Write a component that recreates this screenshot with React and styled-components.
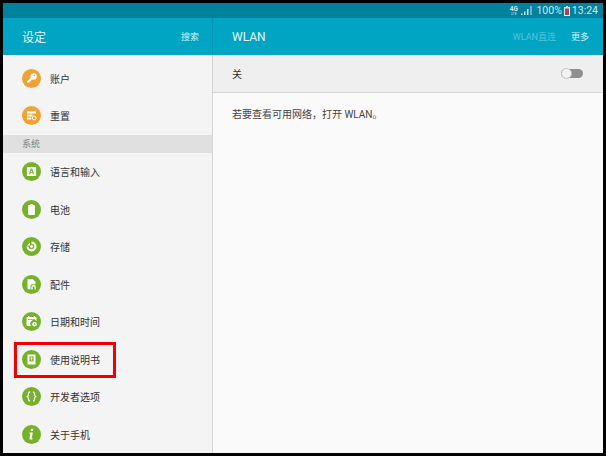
import React from 'react';
import styled, { createGlobalStyle } from 'styled-components';

const GlobalStyle = createGlobalStyle`
  html, body {
    margin: 0;
    padding: 0;
    background: #000;
  }
  * {
    box-sizing: border-box;
  }
`;

const Frame = styled.div`
  width: 606px;
  height: 456px;
  padding: 3px;
  background: #000;
  overflow: hidden;
  font-family: Roboto, "Noto Sans CJK SC", sans-serif;
`;

const Screen = styled.div`
  position: relative;
  height: 450px;
  display: flex;
  flex-direction: column;
  background: #fafafa;
  overflow: hidden;
`;

const StatusBar = styled.div`
  height: 15px;
  flex: none;
  background: #00829f;
  display: flex;
  align-items: center;
  justify-content: flex-end;
  padding-right: 5px;
  color: #cfe6ec;
  font-size: 10.5px;
`;

const StatusText = styled.span`
  display: flex;
  align-items: center;
  margin-left: ${({ $gap }) => $gap || 0}px;
  line-height: 15px;
`;

const Columns = styled.div`
  flex: 1;
  display: flex;
  min-height: 0;
`;

const Sidebar = styled.div`
  width: 210px;
  flex: none;
  display: flex;
  flex-direction: column;
  background: #f4f4f4;
  border-right: 1px solid #d4d4d4;
`;

const Main = styled.div`
  flex: 1;
  display: flex;
  flex-direction: column;
  background: #fafafa;
`;

const HeaderBar = styled.div`
  height: 37px;
  flex: none;
  display: flex;
  align-items: center;
  justify-content: space-between;
  background: #00a5c4;
  padding: 0 14px 0 19px;
  color: #e4f5f8;
`;

const SideHeaderBar = styled(HeaderBar)`
  margin-right: -1px;
  padding-right: 13px;
  border-right: 1px solid #0095b2;
`;

const HeaderTitle = styled.span`
  font-size: 12px;
`;

const HeaderAction = styled.span`
  font-size: 9px;
  margin-left: 15px;
  color: ${({ $dim }) => ($dim ? '#55c4da' : '#d6f0f5')};
`;

const HeaderActions = styled.div`
  display: flex;
  align-items: center;
`;

const List = styled.div`
  padding-top: 4.5px;
  display: flex;
  flex-direction: column;
`;

const Row = styled.div`
  height: 37.5px;
  flex: none;
  display: flex;
  align-items: center;
  padding-left: 19px;
  color: #333;
  font-size: 10px;
`;

const IconCircle = styled.span`
  width: 19px;
  height: 19px;
  flex: none;
  border-radius: 50%;
  background: ${({ $color }) => $color};
  margin-right: 9px;
  display: flex;
  align-items: center;
  justify-content: center;
`;

const SectionTitle = styled.div`
  height: 18.5px;
  flex: none;
  background: #e0e0e0;
  padding-left: 19px;
  color: #808080;
  font-size: 9px;
  line-height: 18px;
`;

const SwitchRow = styled.div`
  height: 38px;
  flex: none;
  display: flex;
  align-items: center;
  justify-content: space-between;
  padding: 0 20px 0 19px;
  background: #efefef;
  border-bottom: 1px solid #d6d6d6;
  color: #333;
  font-size: 10px;
`;

const SwitchTrack = styled.span`
  position: relative;
  display: block;
  width: 22px;
  height: 9px;
  border-radius: 5px;
  background: #8f8f8f;
`;

const SwitchKnob = styled.span`
  position: absolute;
  left: 0;
  top: -1px;
  width: 11px;
  height: 11px;
  border-radius: 50%;
  background: #f2f2f2;
  border: 1px solid #c4c4c4;
`;

const Hint = styled.div`
  padding: 14px 19px;
  color: #444;
  font-size: 10px;
  line-height: 16px;
`;

// red box drawn on top of the screenshot
const Highlight = styled.div`
  position: absolute;
  left: 11px;
  top: 339px;
  width: 102px;
  height: 36px;
  border: 3px solid #f00000;
  pointer-events: none;
`;

const NetworkBadge = styled.span`
  width: 9px;
  display: flex;
  flex-direction: column;
  align-items: center;
  font-size: 6.5px;
  line-height: 6px;
  font-weight: 700;
`;

const NetworkSub = styled.span`
  font-size: 3.5px;
  line-height: 4px;
  font-weight: 400;
`;

const Glyph = ({ children }) => (
  <svg width="13" height="13" viewBox="0 0 13 13" fill="#fff">
    {children}
  </svg>
);

const orange = '#f0a232';
const green = '#75b229';

const topItems = [
  {
    label: '账户',
    color: orange,
    icon: (
      <Glyph>
        <circle cx="8.600" cy="4.400" r="3.200" />
        <path d="M6.800 5.200 8 6.400 4 10.800H2.200V9Z" />
        <circle cx="9.400" cy="3.600" r=".8" fill={orange} />
      </Glyph>
    ),
  },
  {
    label: '重置',
    color: orange,
    icon: (
      <Glyph>
        <path d="M2 2.200h9v2.400H2zM2 5.400h5.500v2.200H2zM2 8.400h4.200v2.200H2z" />
        <circle cx="9.200" cy="9" r="1.900" fill="none" stroke="#fff" strokeWidth="1" />
      </Glyph>
    ),
  },
];

const systemItems = [
  {
    label: '语言和输入',
    icon: (
      <Glyph>
        <path
          fillRule="evenodd"
          d="M2.500 2h8a.6.6 0 0 1 .6.6v7.800a.6.6 0 0 1-.6.6h-8a.6.6 0 0 1-.6-.6V2.600a.6.6 0 0 1 .6-.6ZM5.800 3.500 4 9.300h1.100l.4-1.200h2l.4 1.200H9L7.200 3.500ZM5.800 7.200l.7-2.300.7 2.300Z"
        />
      </Glyph>
    ),
  },
  {
    label: '电池',
    icon: (
      <Glyph>
        <path d="M5.200 1h2.600v1h1.400c.4 0 .7.3.7.7v8.600c0 .4-.3.7-.7.7H3.800a.7.7 0 0 1-.7-.7V2.700c0-.4.3-.7.7-.7h1.400Z" />
      </Glyph>
    ),
  },
  {
    label: '存储',
    icon: (
      <Glyph>
        <path
          fillRule="evenodd"
          d="M6.500 1.500a5 5 0 1 1-5 5h2.200a2.800 2.800 0 1 0 2.800-2.800Z"
        />
        <circle cx="6.500" cy="6.500" r="1.400" />
        <path d="M2 5.500 5 2.500v3Z" />
      </Glyph>
    ),
  },
  {
    label: '配件',
    icon: (
      <Glyph>
        <path d="M2.500 1.200h5.500l2.500 2.500v2.500H7a1.500 1.500 0 0 0-1.500 1.500v3.500h-3Z" />
        <path
          d="M7 11.500V9.300a1.600 1.600 0 0 1 3.200 0v2.200"
          fill="none"
          stroke="#fff"
          strokeWidth="1.300"
        />
      </Glyph>
    ),
  },
  {
    label: '日期和时间',
    icon: (
      <Glyph>
        <path d="M3 1h1.200v1h4.600V1H10v1h.8c.4 0 .7.3.7.7v3.400A3.500 3.500 0 0 0 6.300 11H2.200a.7.7 0 0 1-.7-.7V2.700c0-.4.3-.7.7-.7H3Z" />
        <circle cx="9.500" cy="9.300" r="2.300" />
        <path d="M3 4.500h7" stroke={green} strokeWidth=".7" />
        <path d="M9.500 8v1.400h1.200" stroke={green} strokeWidth=".6" fill="none" />
      </Glyph>
    ),
  },
  {
    label: '使用说明书',
    icon: (
      <Glyph>
        <path fillRule="evenodd" d="M2.500 1.500h8v10h-8ZM4.500 3.500v5h4v-5Z" />
        <path d="M6.500 4 5.200 5.600h.9v2h.8v-2h.9Z" />
      </Glyph>
    ),
  },
  {
    label: '开发者选项',
    icon: (
      <Glyph>
        <path
          d="M5 2c-1.500 0-1.500 .8-1.500 2 0 1.400-.2 2.100-1.100 2.500.9.400 1.100 1.100 1.100 2.500 0 1.200 0 2 1.500 2M8 2c1.500 0 1.500 .8 1.500 2 0 1.400.2 2.100 1.100 2.500-.9.400-1.100 1.100-1.100 2.500 0 1.200 0 2-1.500 2"
          fill="none"
          stroke="#fff"
          strokeWidth="1.300"
        />
      </Glyph>
    ),
  },
  {
    label: '关于手机',
    icon: (
      <Glyph>
        <path d="M6 .8h2.400L8 3H5.700ZM5.300 4.500h2.500l-1 5.400c-.1.500.2.500.9.300l-.2 1c-1.600.7-3.200.5-3-1.200l.7-4.300-1 .1.100-.9Z" />
      </Glyph>
    ),
  },
];

const SignalIcon = () => (
  <svg width="12" height="9" viewBox="0 0 12 9" fill="#cfe6ec">
    <path d="M0 7.500h1.500V9H0zM3 5.500h1.500V9H3zM6 3h1.500v6H6zM9.500 0h1v9h-1z" />
  </svg>
);

const BatteryIcon = () => (
  <svg width="6" height="10" viewBox="0 0 6 10">
    <path d="M2 0h2v1h2v9H0V1h2Z" fill="#dbe8eb" />
    <path d="M1 2.500h4v6.500H1Z" fill="#a8473c" />
  </svg>
);

const App = () => (
  <Frame>
    <GlobalStyle />
    <Screen>
      <StatusBar>
        <NetworkBadge>
          4G
          <NetworkSub>LTE</NetworkSub>
        </NetworkBadge>
        <StatusText $gap={3}>
          <SignalIcon />
        </StatusText>
        <StatusText $gap={3}>100%</StatusText>
        <StatusText $gap={2}>
          <BatteryIcon />
        </StatusText>
        <StatusText $gap={2}>13:24</StatusText>
      </StatusBar>
      <Columns>
        <Sidebar>
          <SideHeaderBar>
            <HeaderTitle>设定</HeaderTitle>
            <HeaderAction>搜索</HeaderAction>
          </SideHeaderBar>
          <List>
            {topItems.map((item) => (
              <Row key={item.label}>
                <IconCircle $color={item.color}>{item.icon}</IconCircle>
                {item.label}
              </Row>
            ))}
            <SectionTitle>系统</SectionTitle>
            {systemItems.map((item) => (
              <Row key={item.label}>
                <IconCircle $color={green}>{item.icon}</IconCircle>
                {item.label}
              </Row>
            ))}
          </List>
        </Sidebar>
        <Main>
          <HeaderBar>
            <HeaderTitle>WLAN</HeaderTitle>
            <HeaderActions>
              <HeaderAction $dim>WLAN直连</HeaderAction>
              <HeaderAction>更多</HeaderAction>
            </HeaderActions>
          </HeaderBar>
          <SwitchRow>
            关
            <SwitchTrack>
              <SwitchKnob />
            </SwitchTrack>
          </SwitchRow>
          <Hint>若要查看可用网络，打开 WLAN。</Hint>
        </Main>
      </Columns>
      <Highlight />
    </Screen>
  </Frame>
);

export default App;
